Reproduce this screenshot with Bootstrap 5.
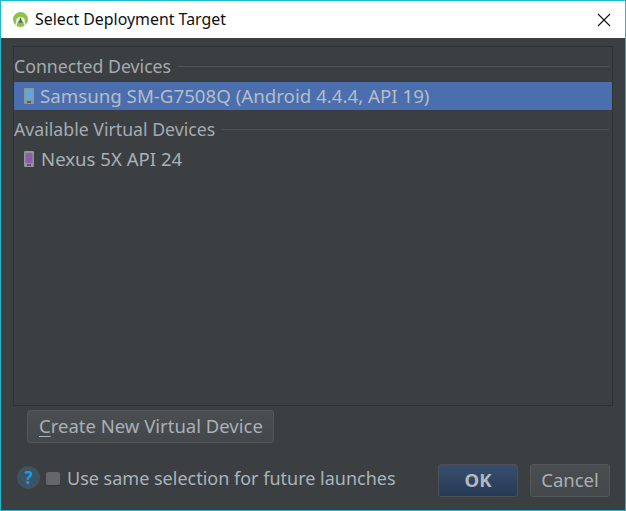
<!DOCTYPE html>
<html lang="en">
<head>
<meta charset="utf-8">
<title>Select Deployment Target</title>
<link rel="stylesheet" href="https://cdn.jsdelivr.net/npm/bootstrap@5.3.0/dist/css/bootstrap.min.css">
<style>
html,body{margin:0;height:511px;overflow:hidden;background:#3c3f41}
body{font-family:"Noto Sans","Open Sans",sans-serif}
.win{width:626px;height:511px;border:1px solid #1cb8cb;background:#3c3f41;color:#a9b0b6}
.tbar{height:37px;background:#fff;color:#111;font-size:15.9px;padding:0 0 0 12px;gap:7px}
.tclose{margin-left:auto;margin-right:14px;width:14px;height:14px}
.pane{margin:8px 12px 0 12px;height:360px;border:1px solid #2f3133;padding:9px 0 0 0}
.ghead{font-size:17.7px;line-height:20px;height:20px;color:#a4abb0;gap:7px}
.ghead::after{content:"";flex:1;height:1px;background:#505355;margin-right:3px}
.ditem{height:28px;font-size:18.7px;color:#a9b0b6;gap:6px;padding-left:10px;white-space:nowrap}
.ditem.sel{background:#4b6eaf;margin:6px 0 9px;color:#b4bdc6}
.ditem.plain{margin-top:6px;gap:7px;font-size:18.6px}
.btnj{height:33px;border:1px solid #55585a;border-radius:3px;background:linear-gradient(#4a4e50,#44484a);color:#a9b0b6;font-size:18.5px;padding:0 10px 0 11px;line-height:30px}
.btnj u{text-underline-offset:3px}
.newrow{margin:4px 0 0 26px}
.foot{margin:21px 15px 0 16px;height:33px}
.help{width:23px;height:23px;border-radius:50%;background:#3a5466;border:1px solid #4d5154;color:#1b9be0;font-weight:700;font-size:17px;line-height:21px;text-align:center;margin-top:-7px}
.chk{width:14px;height:14px;border-radius:2px;background:#646668;border-bottom:1px solid #303234;margin:-4px 7px 0 6px}
.lbl{font-size:18px;color:#a9b4bc;white-space:nowrap;margin-top:-5px}
.okb{width:80px;background:linear-gradient(#374e6f,#273a55);border-color:#4c5054;font-weight:700;color:#b4b9bc;text-align:center;padding:0}
.cancelb{width:80px;margin-left:12px;text-align:center;padding:0}
.pushr{margin-left:auto}
</style>
</head>
<body>
<div class="win">
  <div class="tbar d-flex align-items-center">
    <svg width="15" height="15" viewBox="0 0 16 16"><circle cx="8" cy="8" r="8" fill="#8bc34a"/><path d="M3 10a5 5 0 0 1 10 0z" fill="#d9e2cf"/><path d="M5.500 7l-3 9M10.500 7l3 9" stroke="#f2f4ee" stroke-width="1.500"/><path d="M8 5.500l-2.200 6h4.400z" fill="#59634e"/></svg>
    <span>Select Deployment Target</span>
    <svg class="tclose" viewBox="0 0 14 14"><path d="M1 1l12 12M13 1L1 13" stroke="#111" stroke-width="1.100"/></svg>
  </div>
  <div class="pane">
    <div class="ghead d-flex align-items-center">Connected Devices</div>
    <div class="ditem sel d-flex align-items-center">
      <svg width="10" height="16" viewBox="0 0 10 16"><rect width="10" height="16" rx="1" fill="#8f959a"/><rect x="1.500" y="2" width="7" height="10" fill="#5fa8d8"/><rect x="3" y="13.500" width="4" height="1" fill="#222"/></svg>
      <span>Samsung SM-G7508Q (Android 4.4.4, API 19)</span>
    </div>
    <div class="ghead d-flex align-items-center">Available Virtual Devices</div>
    <div class="ditem plain d-flex align-items-center">
      <svg width="10" height="16" viewBox="0 0 10 16"><rect width="10" height="16" rx="1" fill="#8f959a"/><rect x="1.500" y="2" width="7" height="10" fill="#8d5fa8"/><rect x="3" y="13.500" width="4" height="1" fill="#222"/></svg>
      <span>Nexus 5X API 24</span>
    </div>
  </div>
  <div class="newrow d-flex"><div class="btnj"><u>C</u>reate New Virtual Device</div></div>
  <div class="foot d-flex align-items-center">
    <div class="help">?</div>
    <div class="chk"></div>
    <div class="lbl">Use same selection for future launches</div>
    <div class="btnj okb pushr">OK</div>
    <div class="btnj cancelb">Cancel</div>
  </div>
</div>
</body>
</html>
